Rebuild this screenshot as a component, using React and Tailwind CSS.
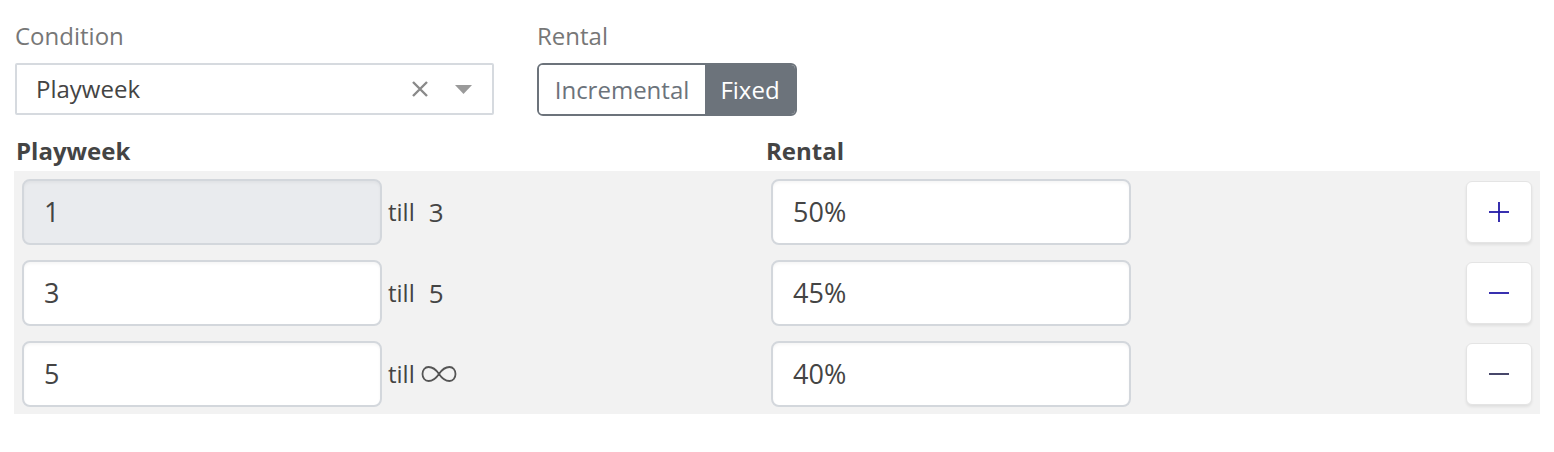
import React from "react";

const font = { fontFamily: '"Open Sans", "Noto Sans", sans-serif' };

function Input({ value, disabled }) {
  return (
    <div
      className={`h-[66px] w-[360px] rounded-[8px] border-2 border-[#d3d7dc] flex items-center pl-[20px] text-[27px] text-[#444] shadow-[inset_0_2px_3px_rgba(0,0,0,0.04)] ${
        disabled ? "bg-[#e9ebee]" : "bg-white"
      }`}
    >
      {value}
    </div>
  );
}

function Btn({ kind, color }) {
  return (
    <div className="h-[62px] w-[66px] rounded-[6px] bg-white border border-[#e4e4e4] shadow-[0_2px_3px_rgba(0,0,0,0.08)] flex items-center justify-center">
      <svg width="22" height="22" viewBox="0 0 22 22">
        <line x1="1" y1="11" x2="21" y2="11" stroke={color} strokeWidth="1.8" />
        {kind === "plus" && (
          <line x1="11" y1="1" x2="11" y2="21" stroke={color} strokeWidth="1.8" />
        )}
      </svg>
    </div>
  );
}

function Infinity() {
  return (
    <svg width="36" height="18" viewBox="0 0 36 18" className="ml-[6px]">
      <path
        d="M18 9 C14 3, 10 2, 7.5 2 C4 2, 1.5 5, 1.5 9 C1.5 13, 4 16, 7.5 16 C10 16, 14 15, 18 9 C22 3, 26 2, 28.5 2 C32 2, 34.5 5, 34.5 9 C34.5 13, 32 16, 28.5 16 C26 16, 22 15, 18 9 Z"
        fill="none"
        stroke="#555"
        strokeWidth="1.8"
      />
    </svg>
  );
}

export default function App() {
  const rows = [
    { from: "1", till: "3", rental: "50%", disabled: true, kind: "plus", color: "#2219a6" },
    { from: "3", till: "5", rental: "45%", kind: "minus", color: "#2219a6" },
    { from: "5", till: "∞", rental: "40%", kind: "minus", color: "#33335a" },
  ];
  return (
    <div className="w-[1554px] h-[452px] bg-white" style={font}>
      <div className="flex pt-[20px] pl-[15px]">
        <div className="w-[479px]">
          <div className="text-[24px] leading-[32px] text-[#777]">Condition</div>
          <div className="mt-[11px] h-[52px] border-2 border-[#d6dadf] rounded-[2px] flex items-center pl-[19px] pr-[20px] text-[24px] text-[#444]">
            <span className="flex-1">Playweek</span>
            <svg width="18" height="18" viewBox="0 0 18 18" className="mr-[26px]">
              <path d="M2 2 L16 16 M16 2 L2 16" stroke="#8a8a8a" strokeWidth="2.4" />
            </svg>
            <svg width="17" height="9" viewBox="0 0 17 9">
              <path d="M0 0 L17 0 L8.5 9 Z" fill="#9a9a9a" />
            </svg>
          </div>
        </div>
        <div className="ml-[43px]">
          <div className="text-[24px] leading-[32px] text-[#777]">Rental</div>
          <div className="mt-[11px] h-[53px] flex rounded-[6px] border-2 border-[#6c737b] overflow-hidden text-[24px]">
            <div className="w-[166px] flex items-center justify-center text-[#6c737b] bg-white">
              Incremental
            </div>
            <div className="w-[90px] flex items-center justify-center text-white bg-[#6c737b]">
              Fixed
            </div>
          </div>
        </div>
      </div>
      <div className="flex mt-[19px] text-[24px] leading-[32px] font-bold text-[#444]">
        <div className="w-[766px] pl-[16px]">Playweek</div>
        <div>Rental</div>
      </div>
      <div className="mt-[4px] ml-[14px] w-[1526px] bg-[#f2f2f2] pt-[8px] pb-[7px] px-[8px] flex flex-col gap-[15px]">
        {rows.map((r, i) => (
          <div key={i} className="flex items-center">
            <div className="w-[749px] flex items-center">
              <Input value={r.from} disabled={r.disabled} />
              <span className="ml-[6px] text-[24px] text-[#444] flex items-center">
                till
                {r.till === "∞" ? (
                  <Infinity />
                ) : (
                  <span className="ml-[14px] text-[26px]">{r.till}</span>
                )}
              </span>
            </div>
            <Input value={r.rental} />
            <div className="flex-1" />
            <Btn kind={r.kind} color={r.color} />
          </div>
        ))}
      </div>
    </div>
  );
}
